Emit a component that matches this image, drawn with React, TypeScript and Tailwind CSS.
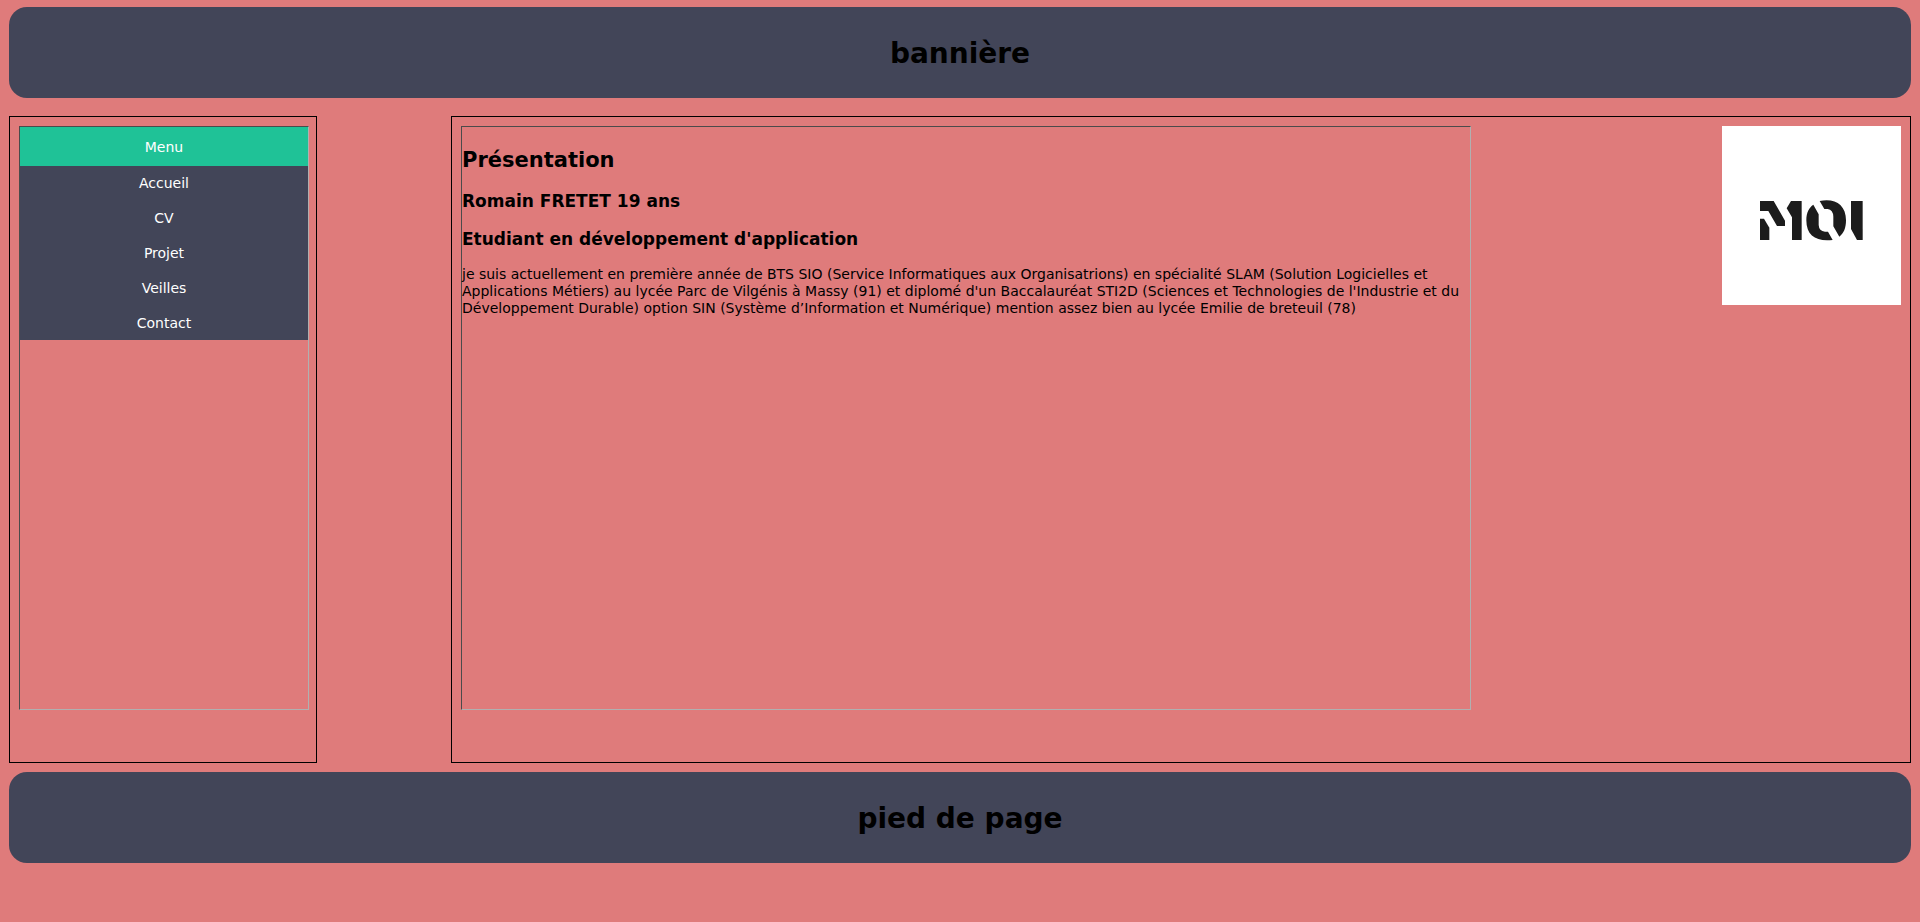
const links = ["Accueil", "CV", "Projet", "Veilles", "Contact"];

function Band({ as: Tag, title }: { as: "header" | "footer"; title: string }) {
  return (
    <Tag className="flex items-center justify-center rounded-[18px] bg-[#424558] pt-[29px] pb-[27px]">
      <h1 className="text-[28px] leading-[35px] font-bold">{title}</h1>
    </Tag>
  );
}

function Logo() {
  return (
    <svg
      role="img"
      aria-label="Moi"
      viewBox="66 48 537 537"
      className="size-[179px] shrink-0 bg-white"
      fill="#1c1c1c"
    >
      <path d="M180 273H221L255 332V348H231L205 303H180Z" />
      <path d="M180 326H192L208 353V390H180Z" />
      <path d="M273 273H305V390H276V322L260 295Z" />
      <path d="M340 284L356 313V345Q357 363 375 365H384L398 390C350 396 319 378 319 331C319 306 328 292 340 284Z" />
      <path d="M359 273C405 264 438 284 438 331C438 354 431 371 418 380L400 349V320Q399 299 383 297H373Z" />
      <path d="M453 273H488V390H471L453 357Z" />
    </svg>
  );
}

export default function App() {
  return (
    <div className="flex min-h-screen flex-col bg-[#df7b7b] px-[9px] py-[7px] font-['Verdana','DejaVu_Sans',sans-serif] text-sm leading-[17px] text-black">
      <Band as="header" title="bannière" />
      <div className="mt-[18px] mb-[9px] flex gap-[134px]">
        <aside className="w-[308px] shrink-0 border border-black pt-[9px] pr-[7px] pb-[52px] pl-[9px]">
          <nav className="h-full border border-t-[#4b4b4b] border-r-[#b0b0b0] border-b-[#b0b0b0] border-l-[#4b4b4b] text-center text-white">
            <h2 className="bg-[#1fc297] pt-3 pb-[10px]">Menu</h2>
            <ul className="grid h-[174px] grid-rows-5 bg-[#424558]">
              {links.map((label) => (
                <li key={label} className="flex">
                  <a href="#" className="flex flex-1 items-center justify-center pt-px">
                    {label}
                  </a>
                </li>
              ))}
            </ul>
          </nav>
        </aside>
        <main className="flex flex-1 items-start justify-between border border-black px-[9px] pt-[9px] pb-[52px]">
          <article className="min-h-[584px] w-[1010px] border border-t-[#4b4b4b] border-r-[#b0b0b0] border-b-[#b0b0b0] border-l-[#4b4b4b] pt-5">
            <h2 className="text-[21px] leading-[26px] font-bold">Présentation</h2>
            <h3 className="mt-[18px] text-[17px] leading-[20px] font-bold">Romain FRETET 19 ans</h3>
            <h3 className="mt-[18px] text-[17px] leading-[20px] font-bold">
              Etudiant en développement d'application
            </h3>
            <p className="mt-[17px]">
              je suis actuellement en première année de BTS SIO (Service Informatiques aux
              Organisatrions) en spécialité SLAM (Solution Logicielles et Applications Métiers) au
              lycée Parc de Vilgénis à Massy (91) et diplomé d'un Baccalauréat STI2D (Sciences et
              Technologies de l'Industrie et du Développement Durable) option SIN (Système
              d’Information et Numérique) mention assez bien au lycée Emilie de breteuil (78)
            </p>
          </article>
          <Logo />
        </main>
      </div>
      <Band as="footer" title="pied de page" />
    </div>
  );
}
